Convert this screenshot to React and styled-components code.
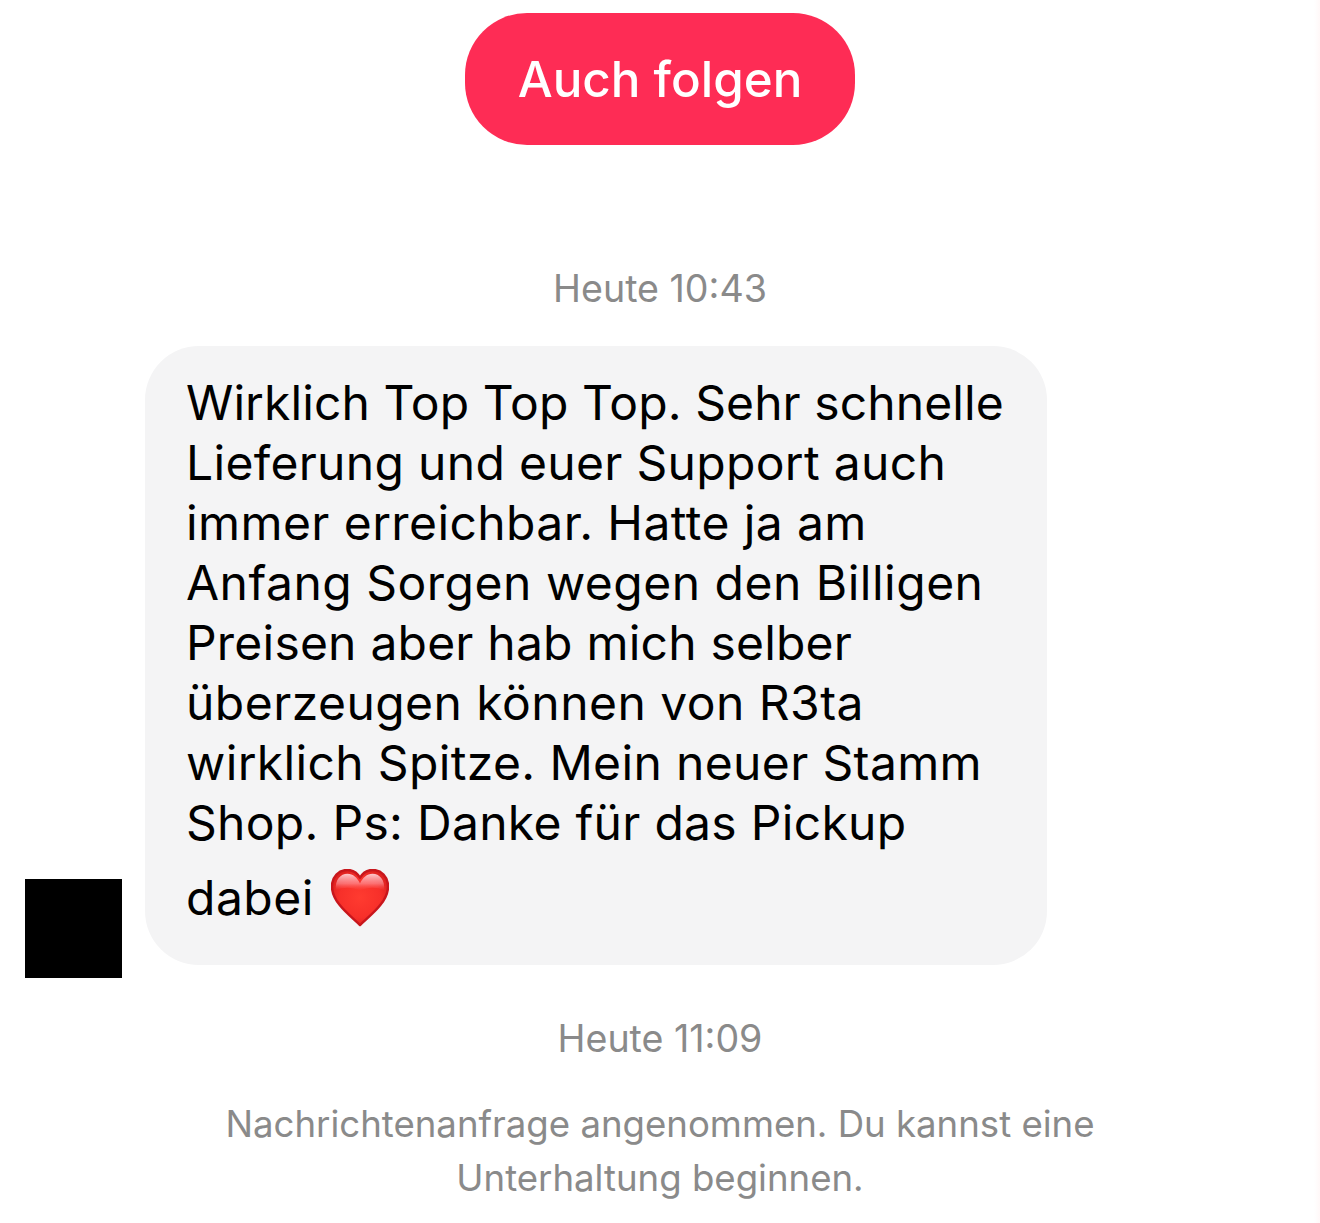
import React from 'react';
import styled, { createGlobalStyle } from 'styled-components';

const GlobalStyle = createGlobalStyle`
  html, body {
    margin: 0;
    padding: 0;
    background: #fff;
  }
  body {
    font-family: Inter, "Liberation Sans", sans-serif;
    -webkit-font-smoothing: antialiased;
  }
`;

const Page = styled.div`
  width: 1320px;
  height: 1223px;
  overflow: hidden;
  box-sizing: border-box;
  padding-top: 13px;
  display: flex;
  flex-direction: column;
  align-items: center;
  background: linear-gradient(to right, #fff 1314px, #fff8f8 1320px);
`;

const FollowButton = styled.button`
  width: 390px;
  height: 132px;
  border: none;
  border-radius: 62px;
  background: #fe2c55;
  color: #fff;
  font-family: inherit;
  font-size: 49.3px;
  font-weight: 500;
  padding: 0;
`;

const Stamp = styled.div`
  margin-top: ${({ $top }) => $top}px;
  height: 44px;
  line-height: 44px;
  font-size: 37.6px;
  color: #8a8a8a;
  text-align: center;
`;

const MessageRow = styled.div`
  align-self: stretch;
  margin-top: 35px;
  padding-left: 25px;
  display: flex;
  align-items: flex-end;
  gap: 23px;
`;

const Avatar = styled.div`
  width: 97px;
  height: 99px;
  margin-bottom: -13px;
  background: #000;
  flex: none;
`;

const Bubble = styled.div`
  width: 902px;
  height: 619px;
  box-sizing: border-box;
  padding: 27px 41px 0 42px;
  border-radius: 54px;
  background: #f4f4f5;
  color: #000;
  font-size: 48px;
  line-height: 60px;
  white-space: nowrap;
`;

const TextLine = styled.div`
  margin-left: -1px;
  letter-spacing: ${({ $spacing }) => $spacing}px;
`;

const LastLine = styled.div`
  display: flex;
  align-items: center;
  gap: 17px;
  height: 73px;
  margin: 8px 0 0 -1px;
  letter-spacing: 0.5px;
`;

const Notice = styled.div`
  margin-top: 36px;
  font-size: 36.6px;
  line-height: 54px;
  color: #8a8a8a;
  text-align: center;
  white-space: nowrap;
`;

const Heart = () => (
  <svg width="58" height="58" viewBox="0 0 60 60">
    <defs>
      <radialGradient id="heartFill" cx="0.5" cy="0.5" r="0.6">
        <stop offset="0" stopColor="#ff3b30" />
        <stop offset="0.6" stopColor="#f7302a" />
        <stop offset="1" stopColor="#d81e1e" />
      </radialGradient>
      <linearGradient id="heartGloss" x1="0" y1="0" x2="0" y2="1">
        <stop offset="0" stopColor="#ffd0d4" stopOpacity="0.95" />
        <stop offset="0.6" stopColor="#ff9aa0" stopOpacity="0.6" />
        <stop offset="1" stopColor="#ff5a5a" stopOpacity="0" />
      </linearGradient>
    </defs>
    <path
      d="M30 58 C21 49 1 35 1 18 C1 8 8 1 17 1 C23 1 27 4 30 9 C33 4 37 1 43 1 C52 1 59 8 59 18 C59 35 39 49 30 58 Z"
      fill="url(#heartFill)"
      stroke="#c8161c"
      strokeWidth="2.5"
      strokeLinejoin="round"
    />
    <path
      d="M5 22 C4 11 10 5 17 5 C23 5 27 9 30 15 C33 9 37 5 43 5 C50 5 56 11 55 22 C46 18 38 19 30 22 C22 19 14 18 5 22 Z"
      fill="url(#heartGloss)"
    />
  </svg>
);

const lines = [
  { text: 'Wirklich Top Top Top. Sehr schnelle', spacing: 0.09 },
  { text: 'Lieferung und euer Support auch', spacing: 0.32 },
  { text: 'immer erreichbar. Hatte ja am', spacing: 0.41 },
  { text: 'Anfang Sorgen wegen den Billigen', spacing: 0.5 },
  { text: 'Preisen aber hab mich selber', spacing: 0.21 },
  { text: 'überzeugen können von R3ta', spacing: 0.46 },
  { text: 'wirklich Spitze. Mein neuer Stamm', spacing: 0.36 },
  { text: 'Shop. Ps: Danke für das Pickup', spacing: 0.3 },
];

const App = () => (
  <Page>
    <GlobalStyle />
    <FollowButton>Auch folgen</FollowButton>
    <Stamp $top={122}>Heute 10:43</Stamp>
    <MessageRow>
      <Avatar />
      <Bubble>
        {lines.map((line) => (
          <TextLine key={line.text} $spacing={line.spacing}>{line.text}</TextLine>
        ))}
        <LastLine>
          dabei <Heart />
        </LastLine>
      </Bubble>
    </MessageRow>
    <Stamp $top={52}>Heute 11:09</Stamp>
    <Notice>
      Nachrichtenanfrage angenommen. Du kannst eine
      <br />
      Unterhaltung beginnen.
    </Notice>
  </Page>
);

export default App;
